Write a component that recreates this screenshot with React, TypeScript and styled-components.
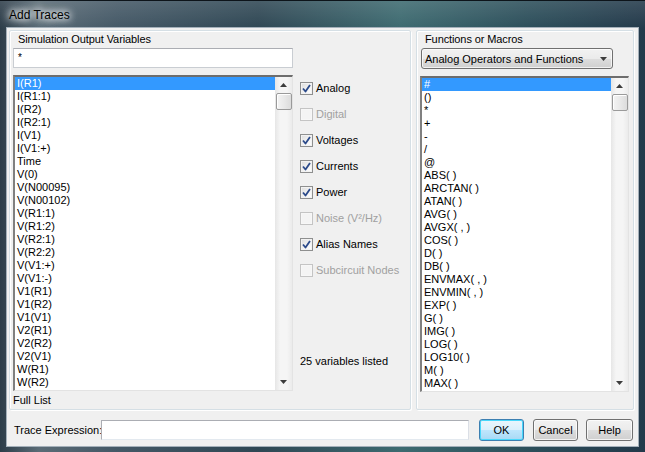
import React from "react";
import styled, { createGlobalStyle } from "styled-components";

const GlobalStyle = createGlobalStyle`
  html, body {
    margin: 0;
    padding: 0;
    background: #1b2731;
  }
  body {
    font-family: "Liberation Sans", Arial, sans-serif;
    font-size: 11px;
    color: #000;
  }
`;

// only the rows that fit in the visible part of each list
const variables = [
  "I(R1)", "I(R1:1)", "I(R2)", "I(R2:1)", "I(V1)", "I(V1:+)", "Time", "V(0)",
  "V(N00095)", "V(N00102)", "V(R1:1)", "V(R1:2)", "V(R2:1)", "V(R2:2)",
  "V(V1:+)", "V(V1:-)", "V1(R1)", "V1(R2)", "V1(V1)", "V2(R1)", "V2(R2)",
  "V2(V1)", "W(R1)", "W(R2)",
];

const functions = [
  "#", "()", "*", "+", "-", "/", "@", "ABS( )", "ARCTAN( )", "ATAN( )",
  "AVG( )", "AVGX( , )", "COS( )", "D( )", "DB( )", "ENVMAX( , )",
  "ENVMIN( , )", "EXP( )", "G( )", "IMG( )", "LOG( )", "LOG10( )", "M( )",
  "MAX( )",
];

const options = [
  { label: "Analog", checked: true, disabled: false },
  { label: "Digital", checked: false, disabled: true },
  { label: "Voltages", checked: true, disabled: false },
  { label: "Currents", checked: true, disabled: false },
  { label: "Power", checked: true, disabled: false },
  { label: "Noise (V²/Hz)", checked: false, disabled: true },
  { label: "Alias Names", checked: true, disabled: false },
  { label: "Subcircuit Nodes", checked: false, disabled: true },
];

const Arrow: React.FC<{ down?: boolean }> = ({ down }) => (
  <svg width="7" height="4" viewBox="0 0 7 4">
    <path d={down ? "M0 0 H7 L3.5 4 Z" : "M0 4 H7 L3.5 0 Z"} fill="#3c3c3c" />
  </svg>
);

const Check: React.FC = () => (
  <svg width="9" height="9" viewBox="0 0 9 9">
    <path
      d="M1 4.5 L3.5 7.5 L8 1"
      fill="none"
      stroke="#2b4a8a"
      strokeWidth="1.8"
      strokeLinejoin="round"
    />
  </svg>
);

const ListBoxView: React.FC<{ items: string[] }> = ({ items }) => (
  <ListBox>
    <ListItems>
      {items.map((item, i) => (
        <Item key={item} selected={i === 0}>
          {item}
        </Item>
      ))}
    </ListItems>
    <ScrollBar>
      <ScrollButton>
        <Arrow />
      </ScrollButton>
      <ScrollThumb />
      <ScrollTrack />
      <ScrollButton>
        <Arrow down />
      </ScrollButton>
    </ScrollBar>
  </ListBox>
);

const App: React.FC = () => {
  return (
    <>
      <GlobalStyle />
      <Window>
        <TitleBar>
          <Title>Add Traces</Title>
        </TitleBar>
        <Client>
          <Panels>
            <LeftPanel>
              <PanelLabel>Simulation Output Variables</PanelLabel>
              <PanelBody>
                <ListColumn>
                  <FilterInput>*</FilterInput>
                  <ListBoxView items={variables} />
                </ListColumn>
                <OptionsColumn>
                  {options.map((o) => (
                    <OptionRow key={o.label}>
                      <CheckBox disabled={o.disabled}>
                        {o.checked && <Check />}
                      </CheckBox>
                      <OptionLabel disabled={o.disabled}>{o.label}</OptionLabel>
                    </OptionRow>
                  ))}
                  <CountText>25 variables listed</CountText>
                </OptionsColumn>
              </PanelBody>
              <FooterText>Full List</FooterText>
            </LeftPanel>
            <RightPanel>
              <PanelLabel>Functions or Macros</PanelLabel>
              <ComboBox>
                <span>Analog Operators and Functions</span>
                <Arrow down />
              </ComboBox>
              <ListBoxView items={functions} />
            </RightPanel>
          </Panels>
          <BottomRow>
            <ExprLabel>Trace Expression:</ExprLabel>
            <ExprInput />
            <Button primary>OK</Button>
            <Button>Cancel</Button>
            <Button wide>Help</Button>
          </BottomRow>
        </Client>
      </Window>
    </>
  );
};

const Window = styled.div`
  width: 645px;
  height: 452px;
  box-sizing: border-box;
  display: flex;
  flex-direction: column;
  padding: 0 7px 6px 7px;
  background:
    linear-gradient(180deg, rgba(255, 255, 255, 0.12) 0px, rgba(255, 255, 255, 0) 28px),
    linear-gradient(90deg, #2d3d49 0%, #5a6b76 6%, #445866 18%, #2f4754 40%, #3d6a70 62%, #2c4e5a 82%, #23394a 100%);
  border-top: 1px solid #0d141a;
`;

const TitleBar = styled.div`
  height: 27px;
  display: flex;
  align-items: center;
  padding-left: 1px;
`;

const Title = styled.span`
  font-family: "Liberation Sans", Arial, sans-serif;
  font-size: 12px;
  color: #000;
  padding: 0 6px 0 1px;
  text-shadow: 0 0 6px #ffffff, 0 0 8px #ffffff, 0 0 10px #e8eef2;
`;

const Client = styled.div`
  flex: 1;
  display: flex;
  flex-direction: column;
  background: #f0f0f0;
  padding: 2px 4px 0 2px;
  box-sizing: border-box;
  box-shadow: 0 0 0 1px #a4b0ba;
`;

const Panels = styled.div`
  display: flex;
  gap: 5px;
  height: 380px;
`;

const Panel = styled.div`
  box-sizing: border-box;
  height: 380px;
  display: flex;
  flex-direction: column;
  border: 1px solid #d5dfe5;
  border-radius: 2px;
  box-shadow: inset 1px 1px 0 #ffffff, 1px 1px 0 #ffffff;
`;

const LeftPanel = styled(Panel)`
  width: 402px;
  padding: 2px 3px 0 3px;
`;

const RightPanel = styled(Panel)`
  flex: 1;
  padding: 2px 4px 0 3px;
`;

const PanelLabel = styled.div`
  line-height: 13px;
  margin-left: 5px;
  white-space: nowrap;
  letter-spacing: -0.1px;
`;

const PanelBody = styled.div`
  display: flex;
  margin-top: 2px;
`;

const ListColumn = styled.div`
  width: 280px;
  display: flex;
  flex-direction: column;
`;

const FilterInput = styled.div`
  box-sizing: border-box;
  height: 20px;
  background: #fff;
  border: 1px solid #c9cdd2;
  border-top-color: #abadb3;
  padding: 3px 4px 0 4px;
  line-height: 11px;
  font-size: 10px;
`;

const ListBox = styled.div`
  box-sizing: border-box;
  margin-top: 7px;
  height: 316px;
  display: flex;
  background: #fff;
  border-top: 2px solid #6d6d6d;
  border-left: 2px solid #808080;
  border-right: 1px solid #e3e3e3;
  border-bottom: 1px solid #e3e3e3;
`;

const ListItems = styled.div`
  flex: 1;
  overflow: hidden;
`;

const Item = styled.div<{ selected?: boolean }>`
  height: 13px;
  line-height: 13px;
  padding-left: 2px;
  white-space: nowrap;
  background: ${(p) => (p.selected ? "#3399ff" : "transparent")};
  color: ${(p) => (p.selected ? "#ffffff" : "#000000")};
`;

const ScrollBar = styled.div`
  width: 17px;
  display: flex;
  flex-direction: column;
  background: linear-gradient(90deg, #e6e6e6 0%, #f5f5f5 30%, #f5f5f5 70%, #ebebeb 100%);
`;

const ScrollButton = styled.div`
  height: 16px;
  display: flex;
  align-items: center;
  justify-content: center;
`;

const ScrollThumb = styled.div`
  box-sizing: border-box;
  height: 17px;
  margin: 0 0 0 1px;
  border: 1px solid #9a9a9a;
  border-radius: 2px;
  background: linear-gradient(90deg, #f4f4f4 0%, #e9e9e9 50%, #dcdcdc 100%);
  box-shadow: inset 1px 1px 0 #ffffff;
`;

const ScrollTrack = styled.div`
  flex: 1;
`;

const OptionsColumn = styled.div`
  flex: 1;
  display: flex;
  flex-direction: column;
  padding-left: 7px;
  padding-top: 27px;
`;

const OptionRow = styled.div`
  height: 26px;
  display: flex;
  align-items: center;
`;

const CheckBox = styled.div<{ disabled?: boolean }>`
  box-sizing: border-box;
  width: 13px;
  height: 13px;
  border: 1px solid ${(p) => (p.disabled ? "#c4c4c4" : "#8e8f8f")};
  background: ${(p) =>
    p.disabled
      ? "#f4f4f4"
      : "linear-gradient(135deg, #dcdcdc 0%, #f4f4f4 60%, #ffffff 100%)"};
  box-shadow: inset 0 0 0 1px ${(p) => (p.disabled ? "#f7f7f7" : "#f2f2f2")};
  display: flex;
  align-items: center;
  justify-content: center;
`;

const OptionLabel = styled.span<{ disabled?: boolean }>`
  margin-left: 3px;
  white-space: nowrap;
  color: ${(p) => (p.disabled ? "#a0a0a0" : "#000000")};
`;

const CountText = styled.div`
  margin-top: auto;
  margin-bottom: 23px;
  line-height: 13px;
  white-space: nowrap;
`;

const FooterText = styled.div`
  margin-top: 3px;
  line-height: 13px;
`;

const ComboBox = styled.div`
  box-sizing: border-box;
  width: 192px;
  height: 21px;
  margin: 2px 0 0 1px;
  padding: 0 5px 0 3px;
  display: flex;
  align-items: center;
  justify-content: space-between;
  border: 1px solid #707070;
  border-radius: 3px;
  background: linear-gradient(180deg, #f2f2f2 0%, #ebebeb 50%, #dddddd 51%, #cfcfcf 100%);
  box-shadow: inset 0 0 0 1px rgba(255, 255, 255, 0.7);
  white-space: nowrap;
`;

const BottomRow = styled.div`
  flex: 1;
  display: flex;
  align-items: center;
  padding: 4px 0 0 5px;
`;

const ExprLabel = styled.span`
  width: 87px;
  white-space: nowrap;
`;

const ExprInput = styled.div`
  box-sizing: border-box;
  width: 368px;
  height: 20px;
  background: #fff;
  border: 1px solid #abadb3;
  border-bottom-color: #e3e9ef;
  border-right-color: #dbdfe6;
`;

const Button = styled.div<{ primary?: boolean; wide?: boolean }>`
  box-sizing: border-box;
  width: ${(p) => (p.wide ? "47px" : "45px")};
  height: 22px;
  margin-left: ${(p) => (p.primary ? "10px" : p.wide ? "8px" : "9px")};
  display: flex;
  align-items: center;
  justify-content: center;
  border-radius: 3px;
  border: 1px solid ${(p) => (p.primary ? "#3c7fb1" : "#707070")};
  background: ${(p) =>
    p.primary
      ? "linear-gradient(180deg, #eaf6fd 0%, #d9f0fc 50%, #bee6fd 51%, #a7d9f5 100%)"
      : "linear-gradient(180deg, #f2f2f2 0%, #ebebeb 50%, #dddddd 51%, #cfcfcf 100%)"};
  box-shadow: inset 0 0 0 1px ${(p) => (p.primary ? "#48d8fb" : "rgba(255,255,255,0.75)")};
`;

export default App;
